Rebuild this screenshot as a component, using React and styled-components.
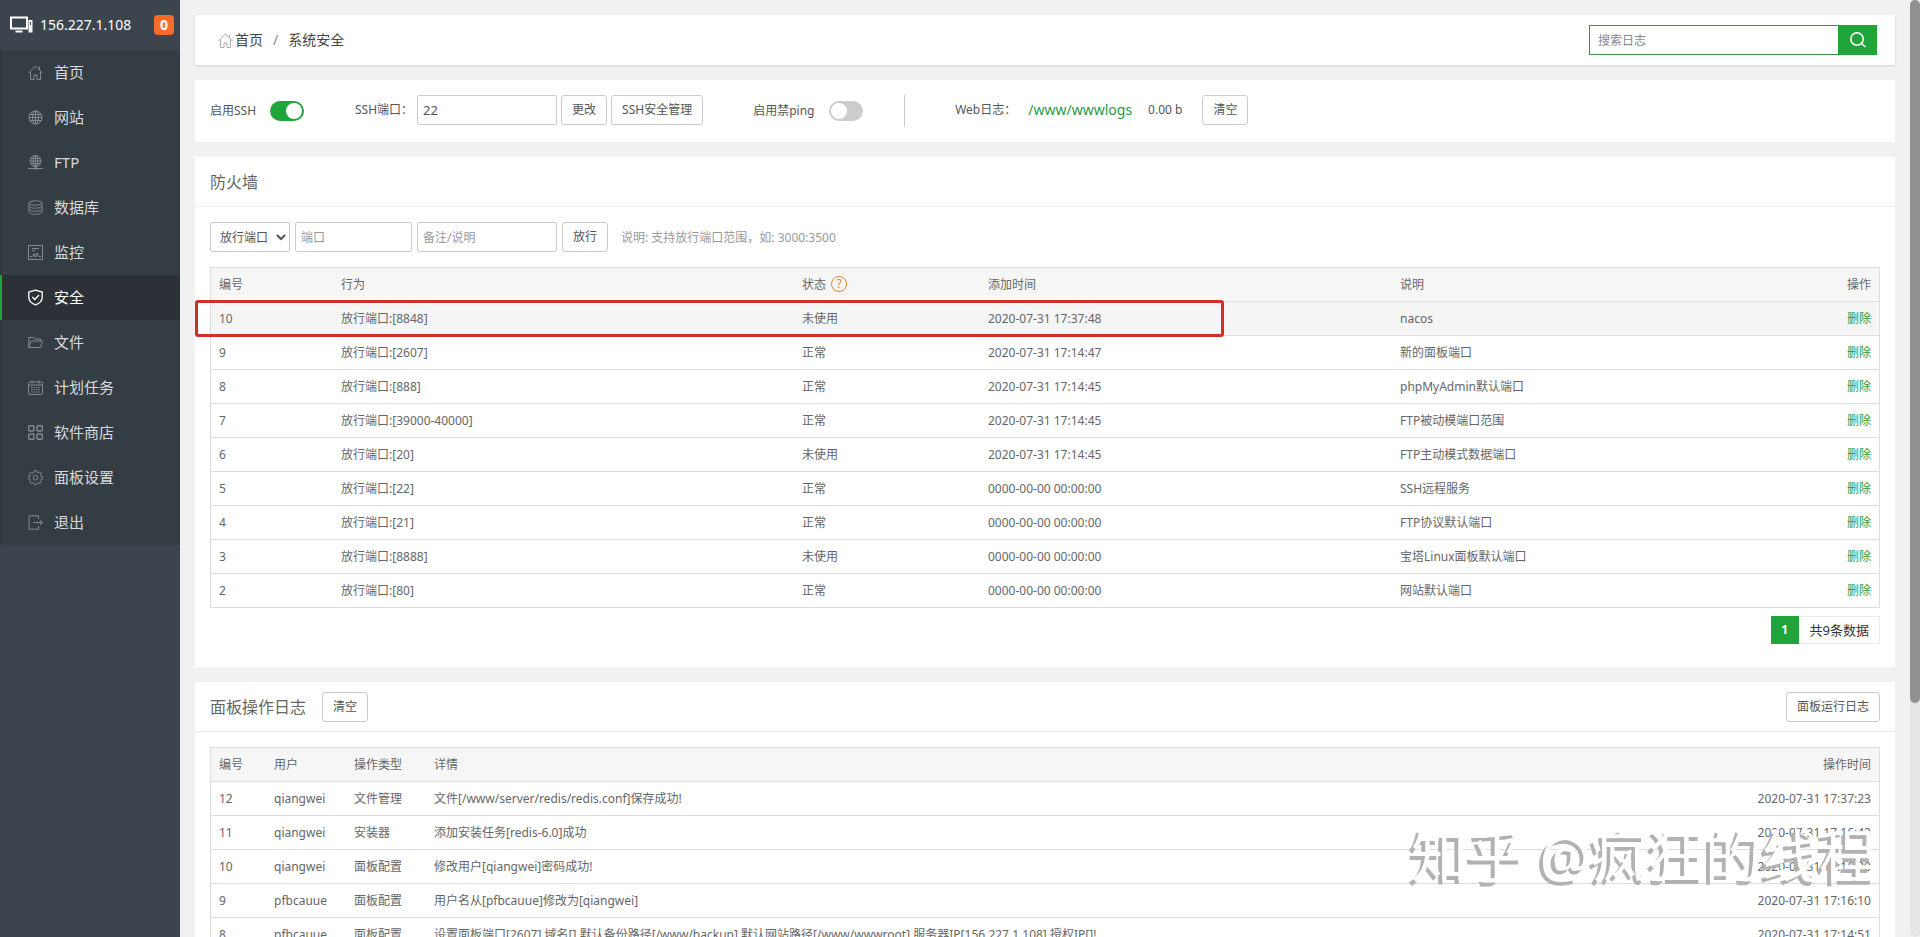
import React from 'react'
import styled, { createGlobalStyle } from 'styled-components'

const menu = [
    { name: '首页', icon: 'home' },
    { name: '网站', icon: 'globe' },
    { name: 'FTP', icon: 'ftp' },
    { name: '数据库', icon: 'database' },
    { name: '监控', icon: 'monitor' },
    { name: '安全', icon: 'shield', active: true },
    { name: '文件', icon: 'folder' },
    { name: '计划任务', icon: 'calendar' },
    { name: '软件商店', icon: 'apps' },
    { name: '面板设置', icon: 'gear' },
    { name: '退出', icon: 'exit' },
]

const rules = [
    { id: 10, port: '8848', status: '未使用', time: '2020-07-31 17:37:48', note: 'nacos', hover: true },
    { id: 9, port: '2607', status: '正常', time: '2020-07-31 17:14:47', note: '新的面板端口' },
    { id: 8, port: '888', status: '正常', time: '2020-07-31 17:14:45', note: 'phpMyAdmin默认端口' },
    { id: 7, port: '39000-40000', status: '正常', time: '2020-07-31 17:14:45', note: 'FTP被动模端口范围' },
    { id: 6, port: '20', status: '未使用', time: '2020-07-31 17:14:45', note: 'FTP主动模式数据端口' },
    { id: 5, port: '22', status: '正常', time: '0000-00-00 00:00:00', note: 'SSH远程服务' },
    { id: 4, port: '21', status: '正常', time: '0000-00-00 00:00:00', note: 'FTP协议默认端口' },
    { id: 3, port: '8888', status: '未使用', time: '0000-00-00 00:00:00', note: '宝塔Linux面板默认端口' },
    { id: 2, port: '80', status: '正常', time: '0000-00-00 00:00:00', note: '网站默认端口' },
]

const logs = [
    { id: 12, user: 'qiangwei', type: '文件管理', detail: '文件[/www/server/redis/redis.conf]保存成功!', time: '2020-07-31 17:37:23' },
    { id: 11, user: 'qiangwei', type: '安装器', detail: '添加安装任务[redis-6.0]成功', time: '2020-07-31 17:16:42' },
    { id: 10, user: 'qiangwei', type: '面板配置', detail: '修改用户[qiangwei]密码成功!', time: '2020-07-31 17:16:20' },
    { id: 9, user: 'pfbcauue', type: '面板配置', detail: '用户名从[pfbcauue]修改为[qiangwei]', time: '2020-07-31 17:16:10' },
    { id: 8, user: 'pfbcauue', type: '面板配置', detail: '设置面板端口[2607],域名[],默认备份路径[/www/backup],默认网站路径[/www/wwwroot],服务器IP[156.227.1.108],授权IP[]!', time: '2020-07-31 17:14:51' },
]

const icons = {
    home: <path d="M.5 8 7.5 1l7 7M2.5 6.5v8H6V10h3v4.500h3.500v-8M11.500 4.500v-3" />,
    globe: (
        <>
            <circle cx="7.5" cy="7.5" r="6.5" />
            <ellipse cx="7.5" cy="7.5" rx="3" ry="6.5" />
            <path d="M1 7.5h13M2 4.5h11M2 10.5h11M7.5 1v13" />
        </>
    ),
    ftp: (
        <>
            <circle cx="7.5" cy="6" r="5.5" />
            <ellipse cx="7.5" cy="6" rx="2.5" ry="5.5" />
            <path d="M2 6h11M3 3.5h9M3 8.5h9M7.5.5v13M0 13.5h15" />
            <path d="M6 13.5h3" strokeWidth="2" />
        </>
    ),
    database: (
        <>
            <ellipse cx="7.5" cy="3" rx="6.5" ry="2.2" />
            <path d="M1 3v9c0 1.200 2.900 2.200 6.500 2.200S14 13.200 14 12V3M1 6c0 1.200 2.900 2.200 6.500 2.200S14 7.200 14 6M1 9c0 1.200 2.900 2.200 6.500 2.200S14 10.200 14 9" />
        </>
    ),
    monitor: (
        <>
            <rect x=".5" y=".5" width="14" height="14" />
            <path d="M2 11.5h2.500l1.500-3 1.500 4L9 8l1.500 3.500H13M4 3.500h7M4 5.500h3" />
        </>
    ),
    shield: <path d="M7.500.2 14.200 2v5.200c0 3.800-2.700 6.200-6.700 7.600C3.500 13.400.8 11 .8 7.200V2zM4.300 7l2.500 2.500 4.200-4.500" strokeWidth="1.3" />,
    folder: <path d="M.8 12.500v-10h4.500L6.800 4h5.700v2M.8 12.500 3 6h11.500l-2 6.500z" />,
    calendar: (
        <>
            <rect x=".5" y="2" width="14" height="12.5" rx="1.5" />
            <path d="M.5 5h14M4 .5v3M11 .5v3" />
            <path d="M3 7.500h9M3 9.700h9M3 12h9" strokeDasharray="1.5 1" />
        </>
    ),
    apps: (
        <g strokeWidth="1.4">
            <rect x=".7" y=".7" width="5.3" height="5.3" rx="1" />
            <rect x="9" y=".7" width="5.3" height="5.3" rx="1" />
            <rect x=".7" y="9" width="5.3" height="5.3" rx="1" />
            <rect x="9" y="9" width="5.3" height="5.3" rx="1" />
        </g>
    ),
    gear: (
        <>
            <path d="M6.300.7h2.400l.4 1.800 1.200.5 1.600-1 1.600 1.600-1 1.600.5 1.200 1.600.3v2.200l-1.600.3-.5 1.200 1 1.600-1.600 1.600-1.600-1-1.200.5-.4 1.500H6.300l-.4-1.500-1.200-.5-1.600 1L1.500 12l1-1.600L2 9.200.400 8.900V6.700L2 6.400l.5-1.200-1-1.600L3.100 2l1.600 1 1.200-.5z" />
            <circle cx="7.5" cy="7.7" r="2.3" />
        </>
    ),
    exit: <path d="M10.5 4V.8H1v13.400h9.500V11M5.500 7.500h9M12 5l2.500 2.500L12 10" />,
}

function Icon({ name }) {
    return (
        <IconSvg viewBox="0 0 15 15" aria-hidden="true">
            {icons[name]}
        </IconSvg>
    )
}

function Sidebar() {
    return (
        <Side>
            <SideHead>
                <svg width="24" height="18" viewBox="0 0 24 18" aria-hidden="true">
                    <rect x="1" y="1.500" width="16" height="11" fill="none" stroke="#fff" strokeWidth="2" />
                    <path d="M5.500 14.500h7v2h-7z" fill="#fff" />
                    <rect x="18.500" y="4" width="4" height="12.500" fill="#fff" />
                    <path d="M20 6h1v3h-1z" fill="#3c444d" />
                </svg>
                <Address>156.227.1.108</Address>
                <Badge>0</Badge>
            </SideHead>
            <Menu>
                {menu.map(item => (
                    <MenuItem key={item.name} href="#" $active={item.active}>
                        <Icon name={item.icon} />
                        {item.name}
                    </MenuItem>
                ))}
            </Menu>
        </Side>
    )
}

function Crumbs() {
    return (
        <CrumbBar>
            <CrumbPath>
                <Icon name="home" />
                <CrumbLink href="#">首页</CrumbLink>
                <Slash>/</Slash>
                <span>系统安全</span>
            </CrumbPath>
            <Search>
                <SearchInput type="text" placeholder="搜索日志" aria-label="搜索日志" />
                <SearchBtn type="button" aria-label="搜索">
                    <svg width="18" height="18" viewBox="0 0 18 18" fill="none" stroke="#fff" strokeWidth="1.6">
                        <circle cx="8" cy="8" r="6.2" />
                        <path d="m12.500 12.500 4 3.500" />
                    </svg>
                </SearchBtn>
            </Search>
        </CrumbBar>
    )
}

function SafeBar() {
    return (
        <Toolbar>
            <SwitchField>
                <label htmlFor="ssh">启用SSH</label>
                <Switch id="ssh" type="checkbox" defaultChecked />
            </SwitchField>
            <PortField>
                <label htmlFor="sshPort">SSH端口：</label>
                <PortInput id="sshPort" type="text" defaultValue="22" />
                <Btn type="button">更改</Btn>
                <Btn type="button">SSH安全管理</Btn>
            </PortField>
            <PingField>
                <label htmlFor="ping">启用禁ping</label>
                <Switch id="ping" type="checkbox" />
            </PingField>
            <WebLog>
                <span>Web日志：</span>
                <PathLink href="#">/www/wwwlogs</PathLink>
                <LogSize>0.00 b</LogSize>
                <Btn type="button">清空</Btn>
            </WebLog>
        </Toolbar>
    )
}

function Firewall() {
    return (
        <Panel>
            <PanelHead>
                <Title>防火墙</Title>
            </PanelHead>
            <PanelBody>
                <RuleForm>
                    <Select aria-label="类型">
                        <option>放行端口</option>
                    </Select>
                    <Input type="text" placeholder="端口" aria-label="端口" $width={117} />
                    <Input type="text" placeholder="备注/说明" aria-label="备注/说明" $width={140} />
                    <Btn type="button">放行</Btn>
                    <Hint>说明: 支持放行端口范围，如: 3000:3500</Hint>
                </RuleForm>
                <TableWrap>
                    <Table>
                        <thead>
                            <tr>
                                <Th $width={122}>编号</Th>
                                <Th $width={461}>行为</Th>
                                <Th $width={186}>状态<Help href="#" aria-label="帮助">?</Help></Th>
                                <Th $width={412}>添加时间</Th>
                                <Th>说明</Th>
                                <Th $width={100} $right>操作</Th>
                            </tr>
                        </thead>
                        <tbody>
                            {rules.map(rule => (
                                <Row key={rule.id} $hover={rule.hover}>
                                    <Td>{rule.id}</Td>
                                    <Td>放行端口:[{rule.port}]</Td>
                                    <Td>{rule.status}</Td>
                                    <Td>{rule.time}</Td>
                                    <Td>{rule.note}</Td>
                                    <Td $right><Remove href="#">删除</Remove></Td>
                                </Row>
                            ))}
                        </tbody>
                    </Table>
                    <Marker />
                </TableWrap>
                <Pager>
                    <PageNow>1</PageNow>
                    <PageCount>共9条数据</PageCount>
                </Pager>
            </PanelBody>
        </Panel>
    )
}

function Logs() {
    return (
        <Panel>
            <PanelHead>
                <Title>面板操作日志</Title>
                <Btn type="button">清空</Btn>
                <RunLogBtn type="button">面板运行日志</RunLogBtn>
            </PanelHead>
            <PanelBody>
                <TableWrap>
                    <Table>
                        <thead>
                            <tr>
                                <Th $width={55}>编号</Th>
                                <Th $width={80}>用户</Th>
                                <Th $width={80}>操作类型</Th>
                                <Th>详情</Th>
                                <Th $width={160} $right>操作时间</Th>
                            </tr>
                        </thead>
                        <tbody>
                            {logs.map(log => (
                                <Row key={log.id}>
                                    <Td>{log.id}</Td>
                                    <Td>{log.user}</Td>
                                    <Td>{log.type}</Td>
                                    <Td>{log.detail}</Td>
                                    <Td $right>{log.time}</Td>
                                </Row>
                            ))}
                        </tbody>
                    </Table>
                </TableWrap>
            </PanelBody>
        </Panel>
    )
}

function App() {
    return (
        <Page>
            <GlobalStyle />
            <Sidebar />
            <Main>
                <Crumbs />
                <SafeBar />
                <Firewall />
                <Logs />
            </Main>
            <ScrollTrack>
                <ScrollThumb />
            </ScrollTrack>
            <Watermark>知乎 @疯狂的线程</Watermark>
        </Page>
    )
}

export default App

const GlobalStyle = createGlobalStyle`
    * {
        box-sizing: border-box;
    }
    body {
        margin: 0;
        background: #f1f1f1;
        color: #555;
        font-family: "Noto Sans", "Noto Sans CJK SC", sans-serif;
        font-size: 12px;
        line-height: 17px;
    }
    button, input, select {
        font: inherit;
        color: inherit;
        margin: 0;
    }
    a {
        text-decoration: none;
    }
`

const Page = styled.div`
    display: flex;
    height: 100vh;
    overflow: hidden;
`

const Side = styled.aside`
    flex: none;
    width: 180px;
    background: #3c444d;
`

const SideHead = styled.div`
    display: flex;
    align-items: center;
    height: 50px;
    padding: 0 6px 0 10px;
`

const Address = styled.span`
    margin-left: 6px;
    color: #fff;
    font-size: 14px;
    line-height: 18px;
`

const Badge = styled.span`
    width: 20px;
    height: 20px;
    margin-left: auto;
    border-radius: 4px;
    background: #f76b2a;
    color: #fff;
    font-size: 14px;
    font-weight: 700;
    line-height: 20px;
    text-align: center;
`

const Menu = styled.nav`
    background: #353d44;
`

const IconSvg = styled.svg`
    flex: none;
    width: 15px;
    height: 15px;
    fill: none;
    overflow: visible;
    stroke: #8b9197;
    stroke-width: 1;
`

const MenuItem = styled.a`
    display: flex;
    align-items: center;
    gap: 11px;
    height: 45px;
    padding-left: 26px;
    border-left: 2px solid ${props => props.$active ? '#20a53a' : '#343739'};
    background: ${props => props.$active ? '#2c3138' : 'transparent'};
    color: ${props => props.$active ? '#fff' : '#d8dadc'};
    font-size: 15px;

    ${IconSvg} {
        stroke: ${props => props.$active ? '#fff' : '#838a90'};
    }
`

const Main = styled.main`
    flex: 1;
    min-width: 0;
    display: flex;
    flex-direction: column;
    gap: 15px;
    padding: 15px;
`

const CrumbBar = styled.header`
    flex: none;
    display: flex;
    align-items: center;
    justify-content: space-between;
    height: 50px;
    padding: 0 18px 0 23px;
    background: #fff;
    box-shadow: 0 1px 2px rgba(0, 0, 0, 0.15);
`

const CrumbPath = styled.div`
    display: flex;
    align-items: center;
    color: #444;
    font-size: 14px;
    line-height: 18px;

    ${IconSvg} {
        stroke: #aaa;
    }
`

const CrumbLink = styled.a`
    margin-left: 2px;
    color: #444;
`

const Slash = styled.span`
    margin: 0 10px;
    color: #888;
`

const Search = styled.form`
    display: flex;
    height: 30px;
`

const SearchInput = styled.input`
    width: 249px;
    padding: 0 8px;
    border: 1px solid #3d9150;
    border-right: 0;
    background: #fff;
    outline: none;

    &::placeholder {
        color: #888;
    }
`

const SearchBtn = styled.button`
    display: flex;
    align-items: center;
    justify-content: center;
    width: 39px;
    padding: 0;
    border: 0;
    background: #20a53a;
    cursor: pointer;
`

const Toolbar = styled.section`
    flex: none;
    display: flex;
    align-items: flex-start;
    height: 62px;
    padding: 15px;
    background: #fff;
    line-height: 30px;
`

const SwitchField = styled.div`
    display: flex;
    align-items: center;
    justify-content: space-between;
    width: 94px;
    height: 32px;
`

const Switch = styled.input`
    appearance: none;
    width: 34px;
    height: 20px;
    padding: 2px;
    border-radius: 10px;
    background: #ccc;
    cursor: pointer;

    &::before {
        content: '';
        display: block;
        width: 16px;
        height: 16px;
        border-radius: 50%;
        background: #fff;
    }

    &:checked {
        background: #20a53a;
    }

    &:checked::before {
        margin-left: 14px;
    }
`

const PortField = styled.div`
    display: flex;
    gap: 4px;
    margin-left: 51px;
`

const PingField = styled(SwitchField)`
    width: 152px;
    padding-right: 41px;
    margin-left: 50px;
    border-right: 1px solid #ccc;
`

const WebLog = styled.div`
    display: flex;
    margin-left: 50px;
`

const PathLink = styled.a`
    margin: 0 16px 0 12px;
    color: #2a9a45;
    font-size: 14px;
`

const LogSize = styled.span`
    margin-right: 20px;
`

const Input = styled.input`
    width: ${props => props.$width}px;
    height: 30px;
    padding: 0 5px;
    border: 1px solid #ccc;
    border-radius: 2px;
    background: #fff;
    outline: none;

    &::placeholder {
        color: #999;
    }
`

const PortInput = styled(Input)`
    width: 140px;
    font-size: 13px;
`

const Select = styled.select`
    width: 80px;
    height: 30px;
    padding: 0 5px;
    border: 1px solid #ccc;
    border-radius: 2px;
    background: #fff;
`

const Btn = styled.button`
    height: 30px;
    padding: 0 10px;
    border: 1px solid #ccc;
    border-radius: 3px;
    background: #fff;
    line-height: 28px;
    white-space: nowrap;
    cursor: pointer;
`

const Panel = styled.section`
    flex: none;
    background: #fff;
`

const PanelHead = styled.div`
    display: flex;
    align-items: center;
    gap: 16px;
    height: 50px;
    padding: 0 15px;
    border-bottom: 1px solid #ececec;
`

const Title = styled.h2`
    margin: 0;
    color: #666;
    font-size: 16px;
    font-weight: 400;
    line-height: 24px;
`

const RunLogBtn = styled(Btn)`
    margin-left: auto;
`

const PanelBody = styled.div`
    padding: 15px 15px 23px;
`

const RuleForm = styled.form`
    display: flex;
    align-items: center;
    gap: 5px;
    margin-bottom: 15px;
`

const Hint = styled.span`
    margin-left: 8px;
    color: #999;
`

const TableWrap = styled.div`
    position: relative;
`

const Table = styled.table`
    width: 100%;
    table-layout: fixed;
    border: 1px solid #ddd;
    border-bottom: 0;
    border-spacing: 0;
    color: #666;
`

const Th = styled.th`
    width: ${props => props.$width ? `${props.$width}px` : 'auto'};
    padding: 8px;
    border-bottom: 1px solid #ddd;
    background: #f6f6f6;
    font-weight: 400;
    text-align: ${props => props.$right ? 'right' : 'left'};
`

const Row = styled.tr`
    background: ${props => props.$hover ? '#f5f5f5' : '#fff'};
`

const Td = styled.td`
    padding: 8px;
    border-bottom: 1px solid #ddd;
    text-align: ${props => props.$right ? 'right' : 'left'};
    white-space: nowrap;
`

const Help = styled.a`
    display: inline-block;
    width: 16px;
    height: 16px;
    margin-left: 5px;
    border: 1px solid #e8862c;
    border-radius: 50%;
    color: #e8862c;
    line-height: 14px;
    text-align: center;
    vertical-align: top;
`

const Remove = styled.a`
    color: #2a9a45;
`

/* red frame round the newly added rule, reaches out to the panel edge */
const Marker = styled.div`
    position: absolute;
    top: 33px;
    left: -15px;
    width: 1029px;
    height: 37px;
    border: 3px solid #d0302a;
    border-radius: 3px;
    pointer-events: none;
`

const Pager = styled.div`
    display: flex;
    justify-content: flex-end;
    margin-top: 8px;
    line-height: 28px;
`

const PageNow = styled.span`
    width: 28px;
    background: #20a53a;
    color: #fff;
    font-weight: 700;
    text-align: center;
`

const PageCount = styled.span`
    padding: 0 10px 0 11px;
    border: 1px solid #ececec;
    border-left: 0;
    color: #333;
    font-size: 13px;
    line-height: 26px;
`

const ScrollTrack = styled.div`
    flex: none;
    width: 10px;
    border-radius: 5px;
    background: #e6e6e6;
`

const ScrollThumb = styled.div`
    height: 75%;
    border-radius: 5px;
    background: #919191;
`

const Watermark = styled.div`
    position: fixed;
    right: 44px;
    bottom: 44px;
    color: #fff;
    font-size: 57px;
    line-height: 76px;
    text-shadow: -4px 4px 0 #b2b2b2;
    white-space: nowrap;
    pointer-events: none;
`
